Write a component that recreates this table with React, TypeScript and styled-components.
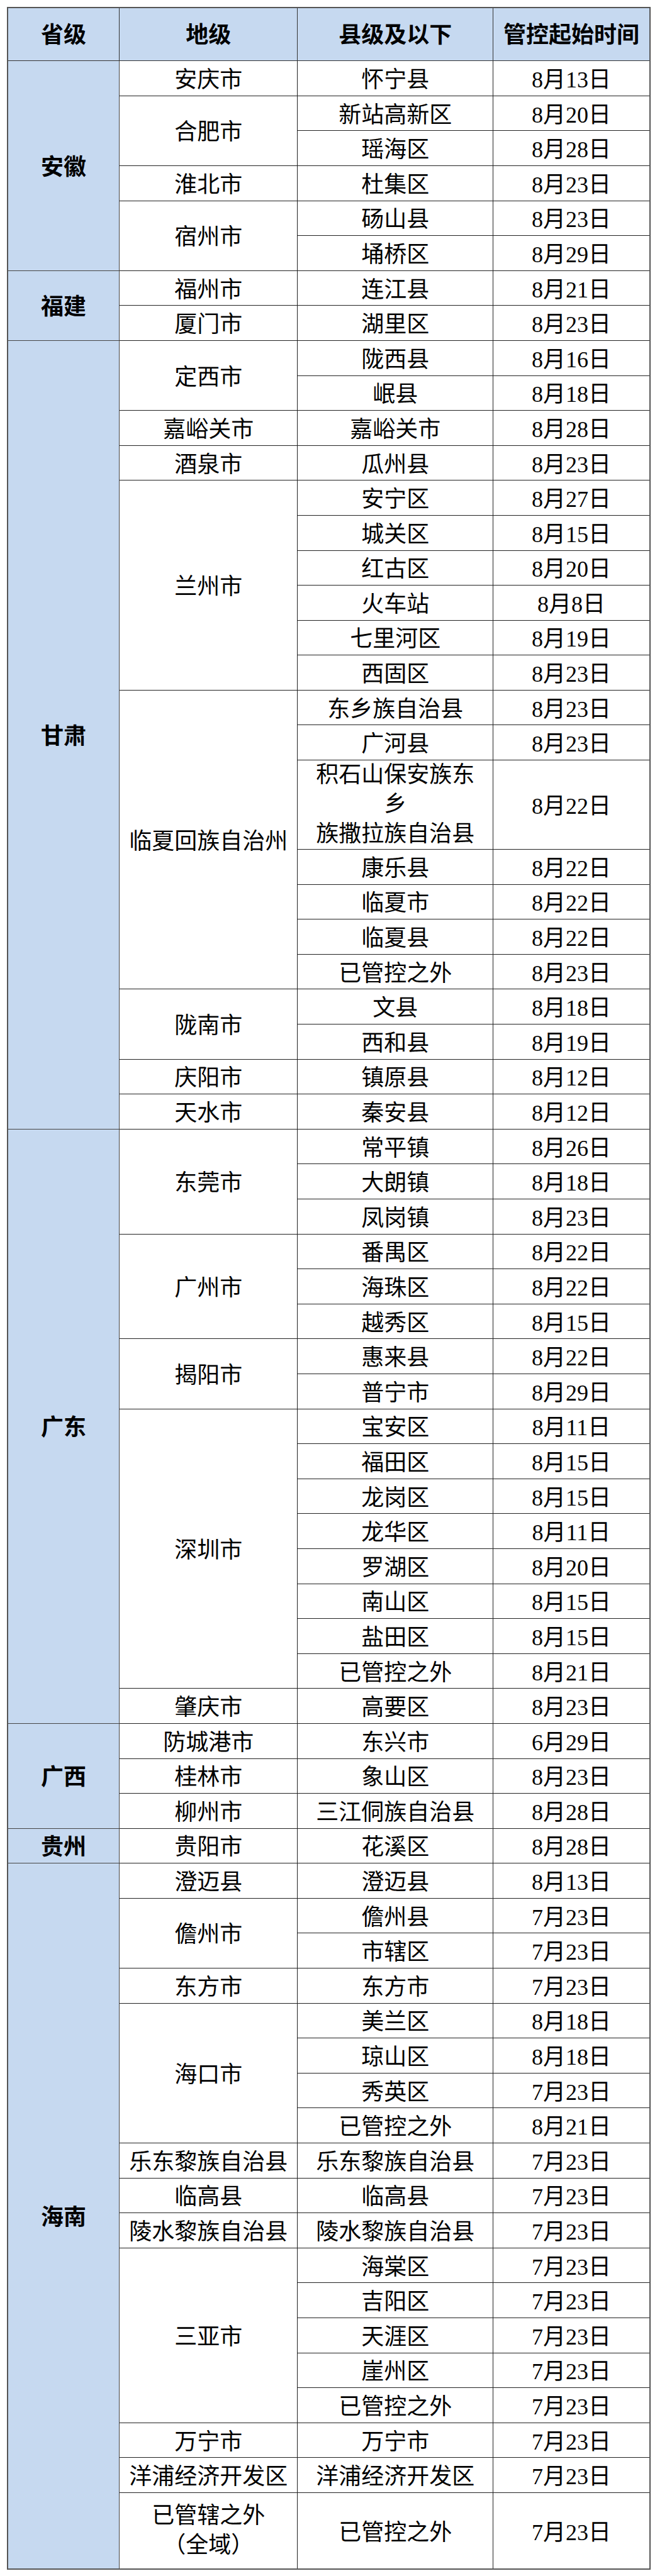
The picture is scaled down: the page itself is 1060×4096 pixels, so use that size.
import React from "react";
import styled, { createGlobalStyle } from "styled-components";

type District = [string, string];

interface City {
  name: string;
  districts: District[];
}

interface Province {
  name: string;
  cities: City[];
}

// 多行的单元格用 "\n" 分行
const data: Province[] = [
  {
    name: "安徽",
    cities: [
      { name: "安庆市", districts: [["怀宁县", "8月13日"]] },
      { name: "合肥市", districts: [["新站高新区", "8月20日"], ["瑶海区", "8月28日"]] },
      { name: "淮北市", districts: [["杜集区", "8月23日"]] },
      { name: "宿州市", districts: [["砀山县", "8月23日"], ["埇桥区", "8月29日"]] },
    ],
  },
  {
    name: "福建",
    cities: [
      { name: "福州市", districts: [["连江县", "8月21日"]] },
      { name: "厦门市", districts: [["湖里区", "8月23日"]] },
    ],
  },
  {
    name: "甘肃",
    cities: [
      { name: "定西市", districts: [["陇西县", "8月16日"], ["岷县", "8月18日"]] },
      { name: "嘉峪关市", districts: [["嘉峪关市", "8月28日"]] },
      { name: "酒泉市", districts: [["瓜州县", "8月23日"]] },
      {
        name: "兰州市",
        districts: [
          ["安宁区", "8月27日"],
          ["城关区", "8月15日"],
          ["红古区", "8月20日"],
          ["火车站", "8月8日"],
          ["七里河区", "8月19日"],
          ["西固区", "8月23日"],
        ],
      },
      {
        name: "临夏回族自治州",
        districts: [
          ["东乡族自治县", "8月23日"],
          ["广河县", "8月23日"],
          ["积石山保安族东\n乡\n族撒拉族自治县", "8月22日"],
          ["康乐县", "8月22日"],
          ["临夏市", "8月22日"],
          ["临夏县", "8月22日"],
          ["已管控之外", "8月23日"],
        ],
      },
      { name: "陇南市", districts: [["文县", "8月18日"], ["西和县", "8月19日"]] },
      { name: "庆阳市", districts: [["镇原县", "8月12日"]] },
      { name: "天水市", districts: [["秦安县", "8月12日"]] },
    ],
  },
  {
    name: "广东",
    cities: [
      {
        name: "东莞市",
        districts: [["常平镇", "8月26日"], ["大朗镇", "8月18日"], ["凤岗镇", "8月23日"]],
      },
      {
        name: "广州市",
        districts: [["番禺区", "8月22日"], ["海珠区", "8月22日"], ["越秀区", "8月15日"]],
      },
      { name: "揭阳市", districts: [["惠来县", "8月22日"], ["普宁市", "8月29日"]] },
      {
        name: "深圳市",
        districts: [
          ["宝安区", "8月11日"],
          ["福田区", "8月15日"],
          ["龙岗区", "8月15日"],
          ["龙华区", "8月11日"],
          ["罗湖区", "8月20日"],
          ["南山区", "8月15日"],
          ["盐田区", "8月15日"],
          ["已管控之外", "8月21日"],
        ],
      },
      { name: "肇庆市", districts: [["高要区", "8月23日"]] },
    ],
  },
  {
    name: "广西",
    cities: [
      { name: "防城港市", districts: [["东兴市", "6月29日"]] },
      { name: "桂林市", districts: [["象山区", "8月23日"]] },
      { name: "柳州市", districts: [["三江侗族自治县", "8月28日"]] },
    ],
  },
  {
    name: "贵州",
    cities: [{ name: "贵阳市", districts: [["花溪区", "8月28日"]] }],
  },
  {
    name: "海南",
    cities: [
      { name: "澄迈县", districts: [["澄迈县", "8月13日"]] },
      { name: "儋州市", districts: [["儋州县", "7月23日"], ["市辖区", "7月23日"]] },
      { name: "东方市", districts: [["东方市", "7月23日"]] },
      {
        name: "海口市",
        districts: [
          ["美兰区", "8月18日"],
          ["琼山区", "8月18日"],
          ["秀英区", "7月23日"],
          ["已管控之外", "8月21日"],
        ],
      },
      { name: "乐东黎族自治县", districts: [["乐东黎族自治县", "7月23日"]] },
      { name: "临高县", districts: [["临高县", "7月23日"]] },
      { name: "陵水黎族自治县", districts: [["陵水黎族自治县", "7月23日"]] },
      {
        name: "三亚市",
        districts: [
          ["海棠区", "7月23日"],
          ["吉阳区", "7月23日"],
          ["天涯区", "7月23日"],
          ["崖州区", "7月23日"],
          ["已管控之外", "7月23日"],
        ],
      },
      { name: "万宁市", districts: [["万宁市", "7月23日"]] },
      { name: "洋浦经济开发区", districts: [["洋浦经济开发区", "7月23日"]] },
      { name: "已管辖之外\n（全域）", districts: [["已管控之外", "7月23日"]] },
    ],
  },
];

const ROW_H = 55.6;
const JISHISHAN_H = 141.3;
const LAST_H = 121.6;

const GlobalStyle = createGlobalStyle`
  html, body {
    margin: 0;
    padding: 0;
    background: #ffffff;
  }
`;

const Page = styled.div`
  padding: 10.8px;
  background: #ffffff;
`;

const Table = styled.table`
  width: 1021px;
  table-layout: fixed;
  border-collapse: collapse;
  border: 2px solid #555555;
  font-family: "Liberation Serif", "Noto Sans CJK SC", serif;
  font-size: 36px;
  color: #000000;
`;

const Row = styled.tr<{ $h: number }>`
  height: ${(p) => p.$h}px;
`;

const HeadCell = styled.th`
  background: #c6d9f0;
  border: 1px solid #333333;
  font-weight: 700;
  text-align: center;
  vertical-align: middle;
  line-height: 47px;
  padding: 5px 0 0;
  white-space: nowrap;
`;

const ProvinceCell = styled.td`
  background: #c6d9f0;
  border: 1px solid #444444;
  font-weight: 700;
  text-align: center;
  vertical-align: middle;
  line-height: 47px;
  padding: 6px 0 0;
`;

const Cell = styled.td<{ $multi?: boolean }>`
  background: #ffffff;
  border: 1px solid #222222;
  text-align: center;
  vertical-align: middle;
  line-height: 47px;
  padding: ${(p) => (p.$multi ? "0" : "6px 0 0")};
  white-space: pre-line;
  overflow: hidden;
`;

const App = () => {
  const rows: React.ReactNode[] = [];

  data.forEach((prov) => {
    const provSpan = prov.cities.reduce((n, c) => n + c.districts.length, 0);
    prov.cities.forEach((city, ci) => {
      city.districts.forEach(([name, date], di) => {
        const multi = name.includes("\n");
        const isLast = city.name.includes("\n");
        const h = multi ? JISHISHAN_H : isLast ? LAST_H : ROW_H;
        rows.push(
          <Row key={`${prov.name}-${city.name}-${name}-${di}`} $h={h}>
            {ci === 0 && di === 0 && (
              <ProvinceCell rowSpan={provSpan}>{prov.name}</ProvinceCell>
            )}
            {di === 0 && (
              <Cell rowSpan={city.districts.length} $multi={isLast}>
                {city.name}
              </Cell>
            )}
            <Cell $multi={multi}>{name}</Cell>
            <Cell>{date}</Cell>
          </Row>
        );
      });
    });
  });

  return (
    <Page>
      <GlobalStyle />
      <Table>
        <colgroup>
          <col style={{ width: 177.9 }} />
          <col style={{ width: 283.2 }} />
          <col style={{ width: 310.7 }} />
          <col style={{ width: 249.2 }} />
        </colgroup>
        <thead>
          <Row $h={84.9}>
            <HeadCell>省级</HeadCell>
            <HeadCell>地级</HeadCell>
            <HeadCell>县级及以下</HeadCell>
            <HeadCell>管控起始时间</HeadCell>
          </Row>
        </thead>
        <tbody>{rows}</tbody>
      </Table>
    </Page>
  );
};

export default App;
